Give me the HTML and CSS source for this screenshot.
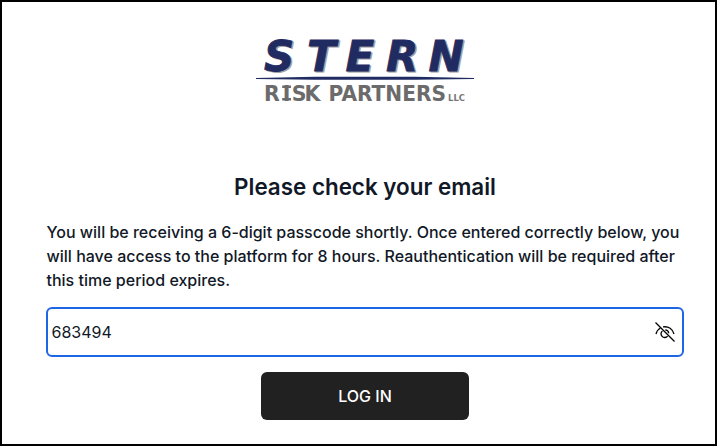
FILE: index.html
```html
<!DOCTYPE html>
<html lang="en">
<head>
    <meta charset="UTF-8">
    <meta name="viewport" content="width=device-width, initial-scale=1.0">
    <title>Stern Risk Partners - Log In</title>
    <link rel="stylesheet" href="styles.css">
</head>
<body>
    <div class="login-container">
        <svg class="logo" viewBox="0 0 240 90" role="img" aria-label="Stern Risk Partners LLC">
            <text class="logo-name logo-shadow" x="20.5 63.5 102 142.5 185" y="47" aria-hidden="true">STERN</text>
            <text class="logo-name" x="19 62 100.5 141 183.5" y="46">STERN</text>
            <path class="logo-line" d="M11 53 L70 51.8 H170 L229 53 V53.9 L170 54.8 H70 L11 53.9 Z"/>
            <text class="logo-sub" x="19 37.7 46.7 59.5" y="75.5">RISK</text>
            <path class="logo-serif" d="M37.2 60.6 h8.8 v2.4 h-8.8 Z M37.2 73.1 h8.8 v2.4 h-8.8 Z"/>
            <text class="logo-sub" x="83.5" y="75.5" textLength="117.5" lengthAdjust="spacingAndGlyphs">PARTNERS</text>
            <text class="logo-llc" x="203" y="75.5" textLength="17" lengthAdjust="spacingAndGlyphs">LLC</text>
        </svg>

        <h2>Please check your email</h2>
        <p>You will be receiving a 6-digit passcode shortly. Once entered correctly below, you will have access to the platform for 8 hours. Reauthentication will be required after this time period expires.</p>

        <form id="loginForm">
            <div class="input-group">
                <input type="text" id="passcode" name="passcode" value="683494" aria-label="Passcode" autocomplete="off">
                <button type="button" class="toggle-button" aria-label="Hide passcode">
                    <svg viewBox="0 0 20 20">
                        <path d="M1 12 C1.6 9.3 3.2 7.2 5.4 6 M8 4.9 C13.5 4 17.8 7 19 12"/>
                        <path d="M7.4 8.9 A3.7 3.7 0 1 0 12.6 14.1 M10.3 7.8 A3.7 3.7 0 0 1 13.7 11.2"/>
                        <path d="M0.5 0.5 L19.5 19.5"/>
                    </svg>
                </button>
            </div>
            <button type="submit" class="login-button">LOG IN</button>
        </form>
    </div>
</body>
</html>
```
FILE: styles.css
```css
* {
    box-sizing: border-box;
}

body {
    margin: 0;
    font-family: Inter, sans-serif;
    color: #111827;
    background-color: #fff;
}

.login-container {
    height: 100vh;
    padding: 23px 31px 0 44px;
    border: 2px solid #000;
    overflow: hidden;
}

.logo {
    display: block;
    width: 240px;
    height: 90px;
    margin: 0 auto;
}

.logo-name {
    font-family: "DejaVu Sans", sans-serif;
    font-size: 42px;
    font-weight: bold;
    font-style: italic;
    fill: #1f2b61;
    stroke: #1f2b61;
    stroke-width: 0.8;
}

.logo-shadow {
    fill: #a0a0a4;
    stroke: #a0a0a4;
}

.logo-line {
    fill: #1f2b61;
}

.logo-sub {
    font-family: "DejaVu Sans", sans-serif;
    font-size: 20.5px;
    font-weight: bold;
    fill: #6b6b6b;
}

.logo-serif {
    fill: #6b6b6b;
}

.logo-llc {
    font-family: "DejaVu Sans", sans-serif;
    font-size: 9.5px;
    font-weight: bold;
    fill: #777;
}

h2 {
    margin: 57px 0 18px;
    font-size: 22.4px;
    line-height: 30px;
    font-weight: 600;
    text-align: center;
}

p {
    margin: 0 0 15px 0.5px;
    font-size: 16px;
    line-height: 24px;
    font-weight: 500;
}

.input-group {
    display: flex;
    align-items: center;
    width: 638px;
    height: 50px;
    margin-bottom: 15px;
    padding: 0 7px 0 3.5px;
    border: 2px solid #1d66e5;
    border-radius: 6px;
}

input {
    flex: 1;
    padding: 0;
    border: none;
    outline: none;
    background: none;
    font-family: inherit;
    font-size: 16px;
    color: #111827;
}

.toggle-button {
    width: 20px;
    height: 20px;
    padding: 0;
    border: none;
    background: none;
    cursor: pointer;
}

.toggle-button svg {
    display: block;
    fill: none;
    stroke: #000;
    stroke-width: 1.3;
}

.login-button {
    display: block;
    width: 208px;
    height: 48px;
    margin: 0 0 0 215px;
    border: none;
    border-radius: 6px;
    background-color: #212121;
    color: #fff;
    font-family: inherit;
    font-size: 16px;
    font-weight: 500;
    cursor: pointer;
}
```
